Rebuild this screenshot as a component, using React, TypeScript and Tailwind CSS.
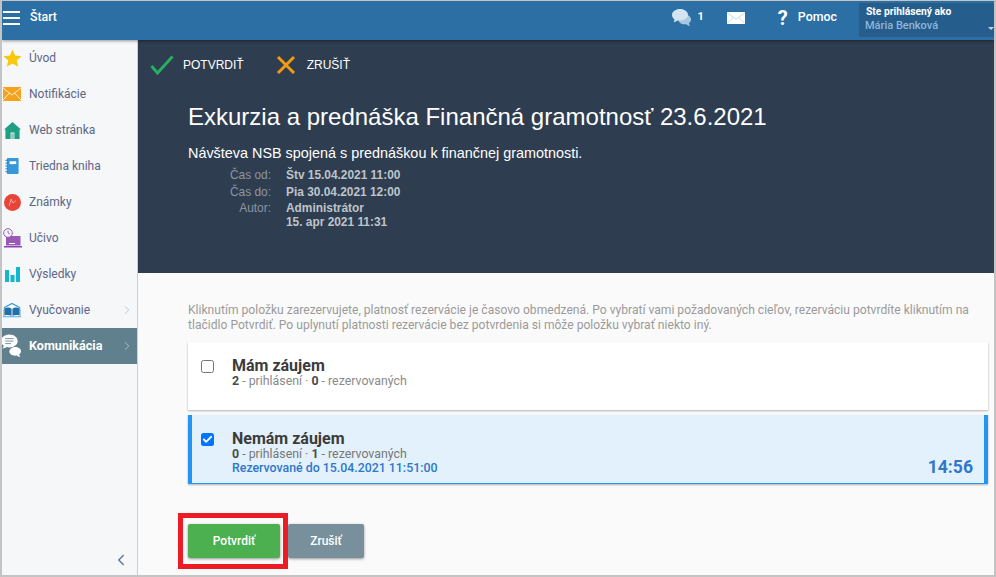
import React from "react";
import { ChevronRight, ChevronLeft, Check } from "lucide-react";

const Star = () => (
  <svg width="19" height="19" viewBox="0 0 20 20">
    <path d="M10 .5l2.800 6.300 6.700.7-5 4.500 1.500 6.800L10 15.300l-6 3.500 1.500-6.800-5-4.500 6.700-.7z" fill="#f9c80e" />
  </svg>
);
const Envelope = () => (
  <svg width="18" height="14" viewBox="0 0 18 14">
    <rect width="18" height="14" fill="#f5a31c" />
    <path d="M0 1l9 7 9-7M0 13l6.500-7M18 13l-6.500-7" fill="none" stroke="#fff" strokeWidth=".8" />
  </svg>
);
const House = () => (
  <svg width="17" height="17" viewBox="0 0 18 18">
    <path d="M9 0l9 8h-1.500v10h-15V8H0zM7 11v7h4v-7z" fill="#1fa085" />
    <rect x="7.700" y="12" width="2.600" height="6" fill="#7cc7b6" />
  </svg>
);
const Notebook = () => (
  <svg width="14" height="16" viewBox="0 0 14 17">
    <rect x="1.500" width="12.500" height="17" rx="1" fill="#3498db" />
    <rect x="4.500" y="3.500" width="7" height="3" fill="#fff" />
    <path d="M0 2.500h2.500M0 5.500h2.500M0 8.500h2.500M0 11.500h2.500M0 14.500h2.500" stroke="#2980b9" strokeWidth="1" />
  </svg>
);
const Grades = () => (
  <svg width="17" height="17" viewBox="0 0 18 18">
    <circle cx="9" cy="9" r="9" fill="#e8443a" />
    <path d="M5.500 12.500L7.500 5.500l2 4 3-2.500" fill="none" stroke="#f8b9b4" strokeWidth=".9" />
  </svg>
);
const Lesson = () => (
  <svg width="19" height="20" viewBox="0 0 19 20">
    <path d="M3 8h14.500v9.500H3z" fill="#9b59b6" />
    <path d="M6 15h6v1H6z" fill="#fff" />
    <rect x="1" y="18" width="18" height="1.500" fill="#8e44ad" />
    <circle cx="5" cy="5" r="4.300" fill="#f5f7f9" stroke="#9b59b6" strokeWidth="1" />
    <path d="M5 2.500V5l2 1" fill="none" stroke="#9b59b6" strokeWidth=".9" />
  </svg>
);
const Bars = () => (
  <svg width="15" height="15" viewBox="0 0 15 15">
    <rect x="0" y="3" width="4" height="12" fill="#13b5d1" />
    <rect x="5.500" y="8" width="4" height="7" fill="#13b5d1" />
    <rect x="11" y="0" width="4" height="15" fill="#13b5d1" />
  </svg>
);
const Book = () => (
  <svg width="18" height="16" viewBox="0 0 20 16">
    <path d="M1 5.500L10 .7l9 4.800" fill="none" stroke="#3498db" strokeWidth="1.200" />
    <path d="M1.500 6c3-1 6-1 8 .500v8c-2-1.200-5-1.200-8-.500zM18.500 6c-3-1-6-1-8 .500v8c2-1.200 5-1.200 8-.500z" fill="#1f6fa8" />
    <path d="M0 6.500v9h20v-9" fill="none" stroke="#3498db" strokeWidth=".9" />
  </svg>
);
const Chat = () => (
  <svg width="24" height="25" viewBox="0 0 24 29">
    <path d="M10 0c5.500 0 10 3.500 10 7.800s-4.500 7.800-10 7.800c-1 0-2-.1-3-.4-1.500 1-3.500 1.600-5.500 1.600 1-1 1.700-2 1.900-3.300C1.100 12 0 10 0 7.800 0 3.500 4.500 0 10 0z" fill="#fff" />
    <path d="M5 5h10M5 8h10M5 11h7" stroke="#61808e" strokeWidth="1" />
    <path d="M17 15c3.800 0 7 2.300 7 5 0 1.500-.7 2.800-2 3.700 0 1.500.6 2.500 1.500 3.300-2 0-3.500-.7-4.700-1.700-.6.100-1.200.2-1.800.2-3.800 0-7-2.300-7-5s3.200-5.500 7-5.500z" fill="#fff" />
  </svg>
);

const items = [
  { label: "Úvod", icon: <Star /> },
  { label: "Notifikácie", icon: <Envelope /> },
  { label: "Web stránka", icon: <House /> },
  { label: "Triedna kniha", icon: <Notebook /> },
  { label: "Známky", icon: <Grades /> },
  { label: "Učivo", icon: <Lesson /> },
  { label: "Výsledky", icon: <Bars /> },
  { label: "Vyučovanie", icon: <Book />, more: true },
  { label: "Komunikácia", icon: <Chat />, more: true, active: true },
];

export default function App() {
  return (
    <div className="relative flex h-[577px] w-[996px] flex-col overflow-hidden border-t border-r-2 border-b-2 border-l-2 border-[#c4c4c4] bg-[#fafafa] font-['Roboto',sans-serif]">
      {/* Top bar */}
      <header className="z-10 flex h-[39px] shrink-0 items-center bg-[#2c6fa5] shadow-[0_1px_3px_rgba(0,0,0,0.4)]">
        <div className="mb-[6px] ml-[1px] flex w-[17px] flex-col gap-[4px]">
          <span className="h-[2px] bg-white" />
          <span className="h-[2px] bg-white" />
          <span className="h-[2px] bg-white" />
        </div>
        <span className="mb-[6px] ml-[10px] text-[12.300px] font-medium text-white">Štart</span>
        <div className="ml-auto flex h-full items-center pb-[6px]">
          <svg width="19" height="17" viewBox="0 0 19 17">
            <path d="M11 5c4 0 8 2 8 5.500 0 1.500-.8 2.700-2 3.500 0 1 .4 2 1 3-1.500-.2-3-1-3.800-1.800-5 .5-8-2-8-5s1-5.200 4.800-5.200z" fill="#a9c8e0" />
            <path d="M8 0c4.400 0 8 2.500 8 5.700s-3.600 5.800-8 5.800c-.8 0-1.500-.1-2.200-.2C4.700 12.300 3 13 1.500 13.200c.6-.8 1-1.800 1-2.800C1 9.300 0 7.600 0 5.700 0 2.500 3.600 0 8 0z" fill="#d4e4f0" />
          </svg>
          <span className="ml-[7px] text-[11px] font-bold text-white">1</span>
          <svg className="ml-[23px]" width="18" height="12" viewBox="0 0 18 12">
            <rect width="18" height="12" fill="#fff" />
            <path d="M0 1l9 6 9-6M0 11.500l6-6M18 11.500l-6-6" fill="none" stroke="#a9c8e0" strokeWidth=".7" />
          </svg>
          <span className="ml-[33px] w-[11px] text-[20px] font-bold leading-none text-white">?</span>
          <span className="ml-[9px] text-[12.400px] font-medium text-white">Pomoc</span>
          <div className="relative ml-[22px] mt-[5px] flex h-[34px] w-[135px] flex-col justify-center rounded-bl-[2px] bg-[#255d8c] pl-[6px]">
            <span className="pl-[1px] text-[10.300px] font-bold leading-[12px] text-white">Ste prihlásený ako</span>
            <span className="text-[11px] font-medium leading-[16px] text-[#8fb6da]">Mária Benková</span>
            <span className="absolute right-0 bottom-[7px] h-0 w-0 border-x-[3px] border-t-[3px] border-x-transparent border-t-[#c3d5e4]" />
          </div>
        </div>
      </header>

      <div className="flex min-h-0 flex-1">
        {/* Sidebar */}
        <aside className="flex w-[136px] shrink-0 flex-col border-r border-[#cfcfcf] bg-[#f5f7f9]">
          <nav className="flex flex-col">
            {items.map((item) => (
              <div
                key={item.label}
                className={`relative flex h-[36px] items-center ${
                  item.active ? "bg-[#61808e] font-bold text-white" : "text-[#5d6686]"
                }`}
              >
                <span className={`flex w-[20px] shrink-0 items-center ${item.active ? "-ml-[1px]" : "justify-center"}`}>
                  {item.icon}
                </span>
                <span className={item.active ? "ml-[8px] text-[12.600px]" : "ml-[7px] text-[12px]"}>{item.label}</span>
                {item.more && (
                  <ChevronRight className="absolute right-[3px] h-[14px] w-[14px] text-[#b9c2c8]" strokeWidth={1.500} />
                )}
              </div>
            ))}
          </nav>
          <div className="mt-auto mb-[6px] flex justify-end pr-[7px]">
            <ChevronLeft className="h-[18px] w-[18px] text-[#5f7c8c]" strokeWidth={2} />
          </div>
        </aside>

        <main className="flex min-w-0 flex-1 flex-col">
          {/* Dark hero */}
          <section className="h-[233px] shrink-0 bg-[#2e3d50] text-white">
            <div className="flex h-[48px] items-center pl-[12px] pt-[1px]">
              <svg width="24" height="20" viewBox="0 0 24 20">
                <path d="M1.500 11l6 7L22.500 1.500" fill="none" stroke="#27ae60" strokeWidth="3" />
              </svg>
              <span className="ml-[9px] font-['Liberation_Sans',sans-serif] text-[12px]">POTVRDIŤ</span>
              <svg className="ml-[32px]" width="20" height="20" viewBox="0 0 20 20">
                <path d="M2 2l16 16M18 2L2 18" fill="none" stroke="#f39c12" strokeWidth="3" />
              </svg>
              <span className="ml-[11px] font-['Liberation_Sans',sans-serif] text-[12px]">ZRUŠIŤ</span>
            </div>
            <div className="pl-[50px] font-['Liberation_Sans',sans-serif]">
              <h1 className="mt-[14px] text-[24px] leading-[30px]">Exkurzia a prednáška Finančná gramotnosť 23.6.2021</h1>
              <p className="mt-[13px] text-[14.400px] leading-[16px]">Návšteva NSB spojená s prednáškou k finančnej gramotnosti.</p>
              <dl className="mt-[6px] grid grid-cols-[83px_1fr] gap-x-[15px] text-[11.900px] text-[#8d96a0]">
                <dt className="h-[17px] text-right leading-[17px]">Čas od:</dt>
                <dd className="font-bold leading-[17px] text-[#bfc4ca]">Štv 15.04.2021 11:00</dd>
                <dt className="h-[17px] text-right leading-[17px]">Čas do:</dt>
                <dd className="font-bold leading-[17px] text-[#bfc4ca]">Pia 30.04.2021 12:00</dd>
                <dt className="text-right leading-[14px]">Autor:</dt>
                <dd className="font-bold leading-[14px] text-[#bfc4ca]">
                  Administrátor
                  <br />
                  15. apr 2021 11:31
                </dd>
              </dl>
            </div>
          </section>

          {/* Content */}
          <section className="flex-1 pl-[50px] pr-[6px]">
            <p className="mt-[30px] text-[12.100px] leading-[15px] text-[#9a9a9a]">
              Kliknutím položku zarezervujete, platnosť rezervácie je časovo obmedzená. Po vybratí vami požadovaných cieľov, rezerváciu potvrdíte kliknutím na tlačidlo Potvrdiť. Po uplynutí platnosti rezervácie bez potvrdenia si môže položku vybrať niekto iný.
            </p>

            <div className="mt-[9px] flex h-[68px] bg-white pl-[13px] pt-[15px] shadow-[0_1px_2px_rgba(0,0,0,0.3)]">
              <span className="mt-[3px] h-[13px] w-[13px] rounded-[2.500px] border border-[#767676] bg-white" />
              <div className="ml-[18px]">
                <div className="text-[16px] leading-[17px] font-bold text-[#3b3b3b]">Mám záujem</div>
                <div className="text-[12.350px] leading-[14px] text-[#8a8a8a]">
                  <b className="text-[#4a4a4a]">2</b> - prihlásení · <b className="text-[#4a4a4a]">0</b> - rezervovaných
                </div>
              </div>
            </div>

            <div className="relative mt-[5px] flex h-[69px] border-r-[4px] border-b border-l-[4px] border-[#2196f3] bg-[#e3f1fc] pl-[9px] pt-[15px] shadow-[0_1px_2px_rgba(0,0,0,0.3)]">
              <span className="mt-[3px] flex h-[13px] w-[13px] items-center justify-center rounded-[2.500px] bg-[#0075ff]">
                <Check className="h-[11px] w-[11px] text-white" strokeWidth={4} />
              </span>
              <div className="ml-[18px]">
                <div className="text-[16px] leading-[17px] font-bold text-[#3b3b3b]">Nemám záujem</div>
                <div className="text-[12.350px] leading-[14px] text-[#777]">
                  <b className="text-[#4a4a4a]">0</b> - prihlásení · <b className="text-[#4a4a4a]">1</b> - rezervovaných
                </div>
                <div className="text-[12.350px] leading-[15px] font-medium text-[#2f77c9]">Rezervované do 15.04.2021 11:51:00</div>
              </div>
              <span className="absolute right-[11px] bottom-[5px] text-[17.600px] font-bold leading-[22px] text-[#2f77c9]">14:56</span>
            </div>

            <div className="mt-[40px] flex gap-[8px] text-[12px] font-medium text-white">
              <button className="h-[34px] w-[92px] rounded-[2px] bg-[#4caf50] shadow-[0_1px_3px_rgba(0,0,0,0.4)]">Potvrdiť</button>
              <button className="h-[34px] w-[76px] rounded-[2px] bg-[#78909c] shadow-[0_1px_3px_rgba(0,0,0,0.4)]">Zrušiť</button>
            </div>
          </section>
        </main>
      </div>

      {/* Red annotation frame */}
      <div className="absolute top-[512px] left-[176px] h-[56px] w-[110px] border-[5px] border-[#ed1c24]" />
    </div>
  );
}
